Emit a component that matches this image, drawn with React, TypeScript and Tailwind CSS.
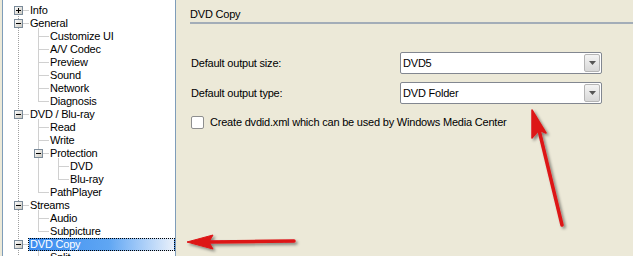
import React from 'react'

type Row = {
  label: string
  level: 1 | 2 | 3
  box?: '+' | '-'
  selected?: boolean
}

const rows: Row[] = [
  { label: 'Info', level: 1, box: '+' },
  { label: 'General', level: 1, box: '-' },
  { label: 'Customize UI', level: 2 },
  { label: 'A/V Codec', level: 2 },
  { label: 'Preview', level: 2 },
  { label: 'Sound', level: 2 },
  { label: 'Network', level: 2 },
  { label: 'Diagnosis', level: 2 },
  { label: 'DVD / Blu-ray', level: 1, box: '-' },
  { label: 'Read', level: 2 },
  { label: 'Write', level: 2 },
  { label: 'Protection', level: 2, box: '-' },
  { label: 'DVD', level: 3 },
  { label: 'Blu-ray', level: 3 },
  { label: 'PathPlayer', level: 2 },
  { label: 'Streams', level: 1, box: '-' },
  { label: 'Audio', level: 2 },
  { label: 'Subpicture', level: 2 },
  { label: 'DVD Copy', level: 1, box: '-', selected: true },
  { label: 'Split', level: 2 },
]

const ROW_H = 13
const TOP = 4
const cy = (i: number) => TOP + i * ROW_H + 6.5
const lineX = { 1: 18.5, 2: 38.5, 3: 58.5 } as const

// vertical child-connector runs: [x, fromRow, toRow]
const runs: [number, number, number][] = [
  [38.5, 1, 7],
  [38.5, 8, 14],
  [58.5, 11, 13],
  [38.5, 15, 17],
  [38.5, 18, 20],
]

function TreeLines() {
  const dot = { stroke: '#a0a0a0', strokeWidth: 1, strokeDasharray: '1 1' }
  return (
    <svg className="pointer-events-none absolute -left-[3px] top-0" width={176} height={256}>
      <defs>
        <linearGradient id="bx" x1="0" y1="0" x2="1" y2="1">
          <stop offset="0" stopColor="#ffffff" />
          <stop offset="1" stopColor="#c9c6bd" />
        </linearGradient>
      </defs>
      <line x1={18.5} y1={10} x2={18.5} y2={256} {...dot} />
      {runs.map(([x, a, b], k) => (
        <line key={k} x1={x} y1={cy(a) + 5} x2={x} y2={Math.min(cy(b), 256)} {...dot} />
      ))}
      {rows.map((r, i) => {
        const x = lineX[r.level]
        return <line key={i} x1={x + 1} y1={cy(i)} x2={x + 10} y2={cy(i)} {...dot} />
      })}
      {rows.map((r, i) => {
        if (!r.box) return null
        const x = lineX[r.level]
        const y = cy(i)
        return (
          <g key={'b' + i}>
            <rect x={x - 4} y={y - 4} width={8} height={8} fill="url(#bx)" stroke="#7a8a99" />
            <line x1={x - 2.5} y1={y} x2={x + 2.5} y2={y} stroke="#000" />
            {r.box === '+' && <line x1={x} y1={y - 2.5} x2={x} y2={y + 2.5} stroke="#000" />}
          </g>
        )
      })}
    </svg>
  )
}

function Combo({ value }: { value: string }) {
  return (
    <div className="flex h-[22px] w-[202px] items-stretch rounded-[2px] border border-[#828790] bg-white">
      <span className="flex-1 pl-[2px] leading-[20px]">{value}</span>
      <span className="m-px flex w-[16px] items-center justify-center rounded-[2px] border border-[#b5b5b5] bg-linear-to-b from-[#f4f4f4] to-[#d8d8d8]">
        <svg width="7" height="4" viewBox="0 0 7 4">
          <path d="M0 0h7L3.5 4z" fill="#555" />
        </svg>
      </span>
    </div>
  )
}

export default function App() {
  return (
    <div
      className="relative flex h-[256px] w-[633px] overflow-hidden bg-[#ece9d8] text-[11px] tracking-[-0.2px] text-black"
      style={{ fontFamily: '"Liberation Sans", Arial, sans-serif' }}
    >
      <div className="relative ml-[2px] h-full w-[174px] shrink-0 border-x border-[#7f9db9] bg-white pt-[4px]">
        <TreeLines />
        {rows.map((r) => (
          <div
            key={r.label + r.level}
            className={`flex h-[13px] ${r.level === 1 ? 'pl-[25px]' : r.level === 2 ? 'pl-[45px]' : 'pl-[65px]'}`}
          >
            <span
              className={
                r.selected
                  ? 'flex-1 border border-dotted border-black bg-linear-to-r from-[#3a8cf0] via-[#5fa6f3] via-55% to-[#e9f0fa] px-[1px] leading-[11px] text-white'
                  : 'px-[2px] leading-[13px]'
              }
            >
              {r.label}
            </span>
          </div>
        ))}
      </div>

      <div className="flex-1">
        <div className="pl-[14px] pt-[8px] leading-[13px]">DVD Copy</div>
        <div className="ml-[14px] mt-px h-[2px] bg-[#a3adb8]" />

        <div className="mt-[28px] flex items-center pl-[15px]">
          <span className="w-[209px]">Default output size:</span>
          <Combo value="DVD5" />
        </div>
        <div className="mt-[8px] flex items-center pl-[15px]">
          <span className="w-[209px]">Default output type:</span>
          <Combo value="DVD Folder" />
        </div>
        <div className="mt-[10px] flex items-center pl-[15px]">
          <span className="h-[13px] w-[13px] rounded-[2px] border border-[#8e8f8f] bg-white" />
          <span className="ml-[6px]">Create dvdid.xml which can be used by Windows Media Center</span>
        </div>
      </div>

      <svg className="pointer-events-none absolute left-0 top-0" width={633} height={256}>
        <defs>
          <filter id="sh" x="-20%" y="-20%" width="140%" height="140%">
            <feDropShadow dx="2" dy="2" stdDeviation="1.5" floodColor="#000" floodOpacity="0.45" />
          </filter>
        </defs>
        <g filter="url(#sh)" fill="#dd1418" stroke="#dd1418">
          <line x1={294} y1={241} x2={208} y2={242} strokeWidth={3.5} strokeLinecap="round" />
          <polygon points="187,242 213,235 209,242 213,249" strokeWidth={1} strokeLinejoin="round" />
          <line x1={562} y1={225} x2={539} y2={130} strokeWidth={3.5} strokeLinecap="round" />
          <polygon points="532,110 546,133 539,130 532,138" strokeWidth={1.5} strokeLinejoin="round" />
        </g>
      </svg>
    </div>
  )
}
